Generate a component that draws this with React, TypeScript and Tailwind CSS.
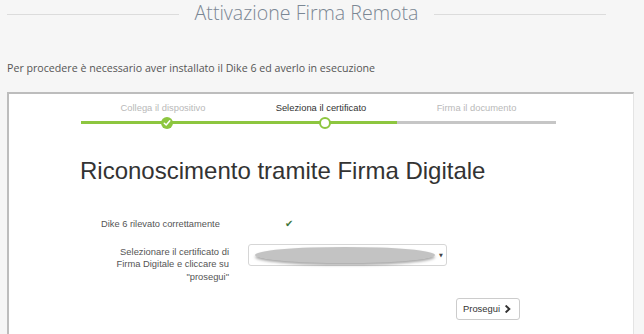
import React from "react";

const arial = { fontFamily: '"Liberation Sans", Arial, sans-serif' };
const open = { fontFamily: '"Open Sans", "Liberation Sans", sans-serif' };

function Stepper() {
  return (
    <div className="relative ml-[72px] w-[475px]" style={arial}>
      <div className="flex h-[12px] items-center text-[9.4px] leading-[12px]">
        <div className="w-[164px] text-center text-[#b9b9b9]">Collega il dispositivo</div>
        <div className="w-[152px] text-center text-[#333333]">Seleziona il certificato</div>
        <div className="w-[159px] text-center text-[#b9b9b9]">Firma il documento</div>
      </div>
      <div className="relative mt-[7px] flex h-[3px]">
        <div className="h-[3px] w-[316px] bg-[#8dc63f]" />
        <div className="h-[3px] flex-1 bg-[#c6c6c6]" />
        <div className="absolute left-[80px] top-[-4.5px] flex h-[12px] w-[12px] items-center justify-center rounded-full bg-[#8dc63f]">
          <svg width="8" height="8" viewBox="0 0 8 8">
            <polyline points="1.3,4.2 3.2,6 6.8,1.8" fill="none" stroke="#ffffff" strokeWidth="1.5" strokeLinecap="round" strokeLinejoin="round" />
          </svg>
        </div>
        <div className="absolute left-[237.5px] top-[-4.5px] h-[12px] w-[12px] rounded-full border-2 border-[#8dc63f] bg-white" />
      </div>
    </div>
  );
}

export default function App() {
  return (
    <div className="relative h-[334px] w-[644px] overflow-hidden bg-[#f6f6f6]">
      <div className="ml-[7px] flex h-[26px] w-[599px] items-start">
        <div className="mt-[14px] h-px flex-1 bg-[#dcdcdc]" />
        <div className="px-[16px] text-[19.6px] font-light leading-[26px] text-[#7b8794]" style={open}>
          Attivazione Firma Remota
        </div>
        <div className="mt-[14px] h-px flex-1 bg-[#dcdcdc]" />
      </div>

      <div className="ml-[7px] mt-[35px] h-[14px] text-[10.65px] leading-[14px] text-[#555555]" style={open}>
        Per procedere è necessario aver installato il Dike 6 ed averlo in esecuzione
      </div>

      <div className="ml-[7px] mt-[17px] h-[260px] w-[627px] border-l-2 border-t-2 border-r border-l-[#bdbdbd] border-t-[#bdbdbd] border-r-[#e4e4e4] bg-white pt-[8px]">
        <Stepper />

        <h1 className="ml-[71px] mt-[33px] h-[27px] text-[24px] leading-[27px] text-[#333333]" style={arial}>
          Riconoscimento tramite Firma Digitale
        </h1>

        <div className="ml-[92px] mt-[34px] flex h-[12px] items-center text-[9.3px] leading-[12px] text-[#555555]" style={arial}>
          <div className="w-[184px]">Dike 6 rilevato correttamente</div>
          <span className="text-[10px] leading-[12px] text-[#3c763d]" style={{ fontFamily: '"DejaVu Sans", sans-serif' }}>
            ✔
          </span>
        </div>

        <div className="mt-[14px] flex h-[40px] items-start" style={arial}>
          <div className="w-[220px] pt-[1.75px] text-right text-[9.4px] leading-[12.5px] text-[#555555]">
            Selezionare il certificato di
            <br />
            Firma Digitale e cliccare su
            <br />
            "prosegui"
          </div>
          <div className="ml-[19px] flex h-[22px] w-[199px] items-center rounded-[3px] border border-[#d6d6d6] bg-white">
            <div className="ml-[6px] h-[16px] w-[180px] rounded-[50%] bg-[#c3c3c3] shadow-[0_2px_3px_rgba(0,0,0,0.35)]" />
            <span className="ml-[4px] text-[5px] leading-[6px] text-[#444444]" style={{ fontFamily: '"DejaVu Sans", sans-serif' }}>
              ▼
            </span>
          </div>
        </div>

        <div className="ml-[447px] mt-[14px] flex h-[22px] w-[64px] items-center rounded-[3px] border border-[#cccccc] bg-white pl-[6px]" style={arial}>
          <span className="text-[9.4px] leading-[12px] text-[#333333]">Prosegui</span>
          <svg className="ml-[5px]" width="6" height="8" viewBox="0 0 6 8">
            <polyline points="1.3,1.2 4.3,4 1.3,6.8" fill="none" stroke="#333333" strokeWidth="2" strokeLinecap="square" />
          </svg>
        </div>
      </div>
    </div>
  );
}
